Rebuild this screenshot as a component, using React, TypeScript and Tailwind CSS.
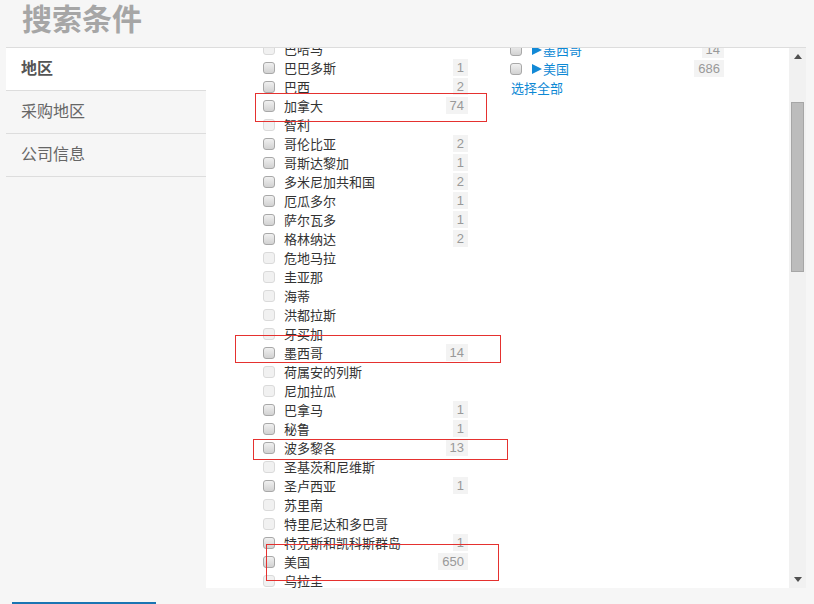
import React from "react";

type Country = { name: string; count?: number };

const countries: Country[] = [
  { name: "巴哈马" },
  { name: "巴巴多斯", count: 1 },
  { name: "巴西", count: 2 },
  { name: "加拿大", count: 74 },
  { name: "智利" },
  { name: "哥伦比亚", count: 2 },
  { name: "哥斯达黎加", count: 1 },
  { name: "多米尼加共和国", count: 2 },
  { name: "厄瓜多尔", count: 1 },
  { name: "萨尔瓦多", count: 1 },
  { name: "格林纳达", count: 2 },
  { name: "危地马拉" },
  { name: "圭亚那" },
  { name: "海蒂" },
  { name: "洪都拉斯" },
  { name: "牙买加" },
  { name: "墨西哥", count: 14 },
  { name: "荷属安的列斯" },
  { name: "尼加拉瓜" },
  { name: "巴拿马", count: 1 },
  { name: "秘鲁", count: 1 },
  { name: "波多黎各", count: 13 },
  { name: "圣基茨和尼维斯" },
  { name: "圣卢西亚", count: 1 },
  { name: "苏里南" },
  { name: "特里尼达和多巴哥" },
  { name: "特克斯和凯科斯群岛", count: 1 },
  { name: "美国", count: 650 },
  { name: "乌拉圭" },
];

const selected: Country[] = [
  { name: "墨西哥", count: 14 },
  { name: "美国", count: 686 },
];

const tabs = ["地区", "采购地区", "公司信息"];

function Checkbox({ disabled }: { disabled?: boolean }) {
  return disabled ? (
    <span className="block w-[12px] h-[12px] shrink-0 rounded-[3px] border border-[#dadada] bg-[#f1f1f1]" />
  ) : (
    <span className="block w-[12px] h-[12px] shrink-0 rounded-[3px] border border-[#a8a8a8] bg-gradient-to-b from-[#f0f0f0] to-[#d2d2d2]" />
  );
}

function Count({ value }: { value: number }) {
  return (
    <span className="ml-auto h-[17px] px-[4px] bg-[#f3f3f3] text-[13px] leading-[17px] text-[#999] font-['Liberation_Sans',Arial,sans-serif]">
      {value}
    </span>
  );
}

function Arrow() {
  return (
    <svg width="10" height="10" viewBox="0 0 10 10" className="shrink-0">
      <polygon points="0,0 10,5 0,10" fill="#1289d6" />
    </svg>
  );
}

export default function App() {
  return (
    <div className="relative w-[814px] h-[604px] overflow-hidden bg-[#f6f6f6] font-['Noto_Sans_CJK_SC','Noto_Sans',sans-serif]">
      {/* title */}
      <div className="ml-[6px] h-[47px] pl-[16px] text-[30px] font-bold leading-[34px] text-[#a6a6a6]">
        搜索条件
      </div>

      <div className="ml-[6px] w-[800px] flex border-t border-[#dddddd]">
        {/* side tabs */}
        <div className="w-[200px]">
          {tabs.map((t, i) => (
            <div
              key={t}
              className={
                i === 0
                  ? "h-[43px] pl-[15px] border-b border-[#dddddd] bg-white text-[16px] font-bold leading-[39px] text-[#555]"
                  : "h-[43px] pl-[15px] border-b border-[#dddddd] text-[16px] leading-[39px] text-[#666]"
              }
            >
              {t}
            </div>
          ))}
        </div>

        {/* filter panel */}
        <div className="w-[600px] h-[540px] flex bg-white">
          <div className="w-[583px] overflow-hidden">
            <div className="-mt-[9px] flex items-start">
              <div className="ml-[57px] w-[205px]">
                {countries.map((c) => (
                  <div key={c.name} className="h-[19px] flex items-center">
                    <Checkbox disabled={!c.count} />
                    <span className="ml-[9px] text-[13px] leading-[19px] text-[#333]">{c.name}</span>
                    {c.count ? <Count value={c.count} /> : null}
                  </div>
                ))}
              </div>

              <div className="ml-[42px] w-[214px] pt-[1px]">
                {selected.map((c) => (
                  <div key={c.name} className="h-[19px] flex items-center">
                    <Checkbox />
                    <span className="ml-[10px]">
                      <Arrow />
                    </span>
                    <span className="ml-[1px] text-[13px] leading-[19px] text-[#0d88d4]">{c.name}</span>
                    {c.count ? <Count value={c.count} /> : null}
                  </div>
                ))}
                <div className="h-[19px] pl-[1px] text-[13px] leading-[19px] text-[#0d88d4]">选择全部</div>
              </div>
            </div>
          </div>

          {/* scrollbar */}
          <div className="w-[17px] h-[540px] flex flex-col bg-[#f1f1f1]">
            <div className="h-[17px] flex items-center justify-center">
              <svg width="8" height="5" viewBox="0 0 8 5">
                <polygon points="4,0 8,5 0,5" fill="#505050" />
              </svg>
            </div>
            <div className="mt-[37px] mx-[2px] h-[170px] border border-[#a6a6a6] bg-[#bcbcbc]" />
            <div className="mt-auto h-[17px] flex items-center justify-center">
              <svg width="8" height="5" viewBox="0 0 8 5">
                <polygon points="0,0 8,0 4,5" fill="#505050" />
              </svg>
            </div>
          </div>
        </div>
      </div>

      <div className="ml-[12px] mt-[14px] w-[144px] border-t-2 border-[#1a75b3]" />

      {/* highlight boxes */}
      <div className="absolute left-[255px] top-[93px] w-[232px] h-[29px] border border-[#e5312f]" />
      <div className="absolute left-[235px] top-[335px] w-[266px] h-[28px] border border-[#e5312f]" />
      <div className="absolute left-[253px] top-[439px] w-[255px] h-[21px] border border-[#e5312f]" />
      <div className="absolute left-[266px] top-[544px] w-[233px] h-[37px] border border-[#e5312f]" />
    </div>
  );
}
